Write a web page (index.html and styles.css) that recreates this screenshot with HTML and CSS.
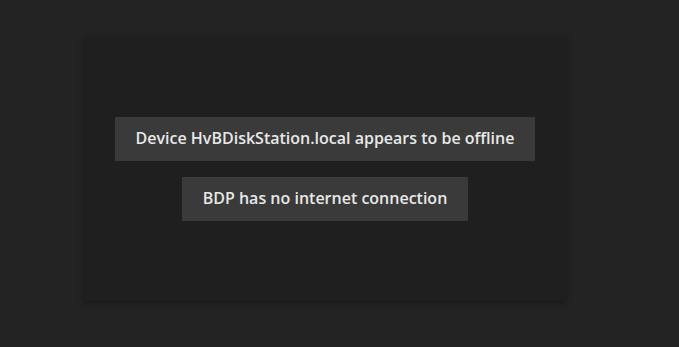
FILE: index.html
```html
<!DOCTYPE html>
<html lang="en">

<head>
    <meta charset="UTF-8">
    <meta name="viewport" content="width=device-width, initial-scale=1.0">
    <title>Offline</title>
    <link rel="stylesheet" href="styles.css">
</head>

<body>
    <div class="panel">
        <div class="message">Device HvBDiskStation.local appears to be offline</div>
        <div class="message">BDP has no internet connection</div>
    </div>
</body>

</html>
```

FILE: styles.css
```css
* {
    margin: 0;
    padding: 0;
    box-sizing: border-box;
}

body {
    background: #232323;
    font-family: 'Open Sans', sans-serif;
    min-height: 100vh;
    padding: 37px 0 0 84px;
}

.panel {
    width: 482px;
    height: 264px;
    background: #1f1f1f;
    box-shadow: 0 2px 6px rgba(0, 0, 0, .35);
    display: flex;
    flex-direction: column;
    align-items: center;
    justify-content: center;
    gap: 16px;
}

.message {
    height: 44px;
    display: flex;
    align-items: center;
    padding: 0 21px 3px;
    background: #3a3a3a;
    color: #e8e8e8;
    font-size: 16px;
    font-weight: 600;
}
```
